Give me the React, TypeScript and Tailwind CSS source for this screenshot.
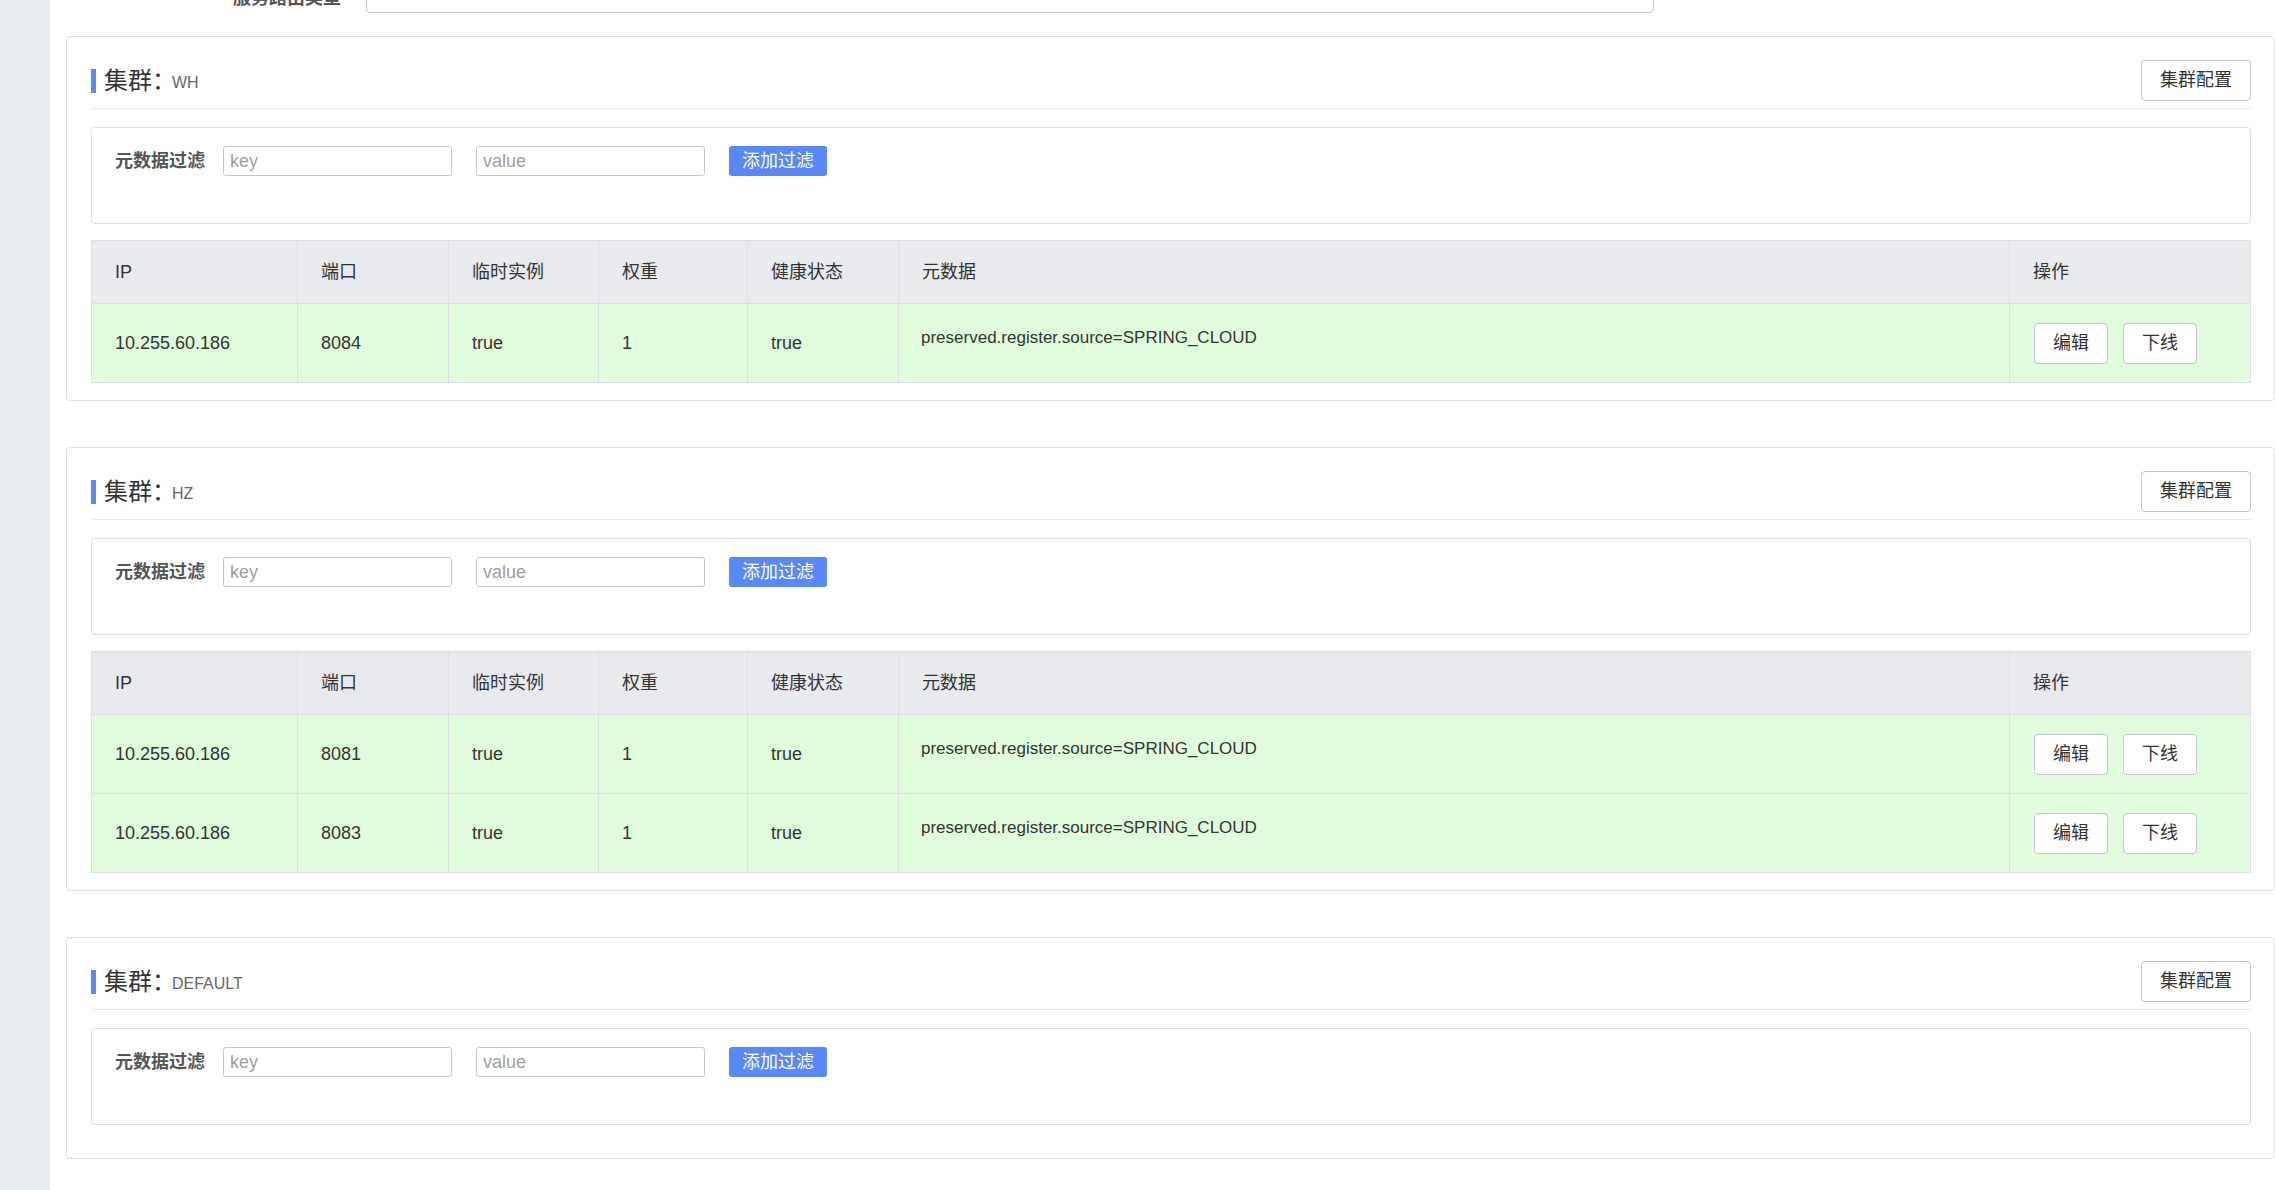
const FONT = "font-['Liberation_Sans','Noto_Sans_CJK_SC',sans-serif]";

type Instance = { ip: string; port: string };

const clusters: { name: string; instances: Instance[] }[] = [
  { name: "WH", instances: [{ ip: "10.255.60.186", port: "8084" }] },
  {
    name: "HZ",
    instances: [
      { ip: "10.255.60.186", port: "8081" },
      { ip: "10.255.60.186", port: "8083" },
    ],
  },
  { name: "DEFAULT", instances: [] },
];

const COLS = "grid grid-cols-[206px_151px_150px_149px_151px_1fr_240px]";
const HEADERS = ["IP", "端口", "临时实例", "权重", "健康状态", "元数据", "操作"];

function ClusterCard({ name, instances }: { name: string; instances: Instance[] }) {
  return (
    <div className="border border-[#dcdee3] rounded-[4px] bg-white pl-[24px] pr-[23px] pt-[23px] pb-[17px]">
      <div className="flex items-center justify-between h-[41px]">
        <div className="flex items-center">
          <span className="w-[5px] h-[24px] bg-[#5888fa]" />
          <span className="ml-[8px] text-[24px] leading-none text-[#333]">集群：</span>
          <span className="-ml-[4px] text-[16px] leading-none text-[#666] mt-[4px]">{name}</span>
        </div>
        <button className="w-[110px] h-[41px] border border-[#c4c6cf] rounded-[4px] bg-white text-[18px] text-[#333]">
          集群配置
        </button>
      </div>
      <div className="mt-[7px] h-px bg-[#e6e7eb]" />

      <div className="mt-[18px] mb-[16px] h-[97px] border border-[#dcdee3] rounded-[4px] pl-[23px] pt-[18px]">
        <div className="flex items-center h-[30px]">
          <span className="text-[18px] font-bold text-[#555] w-[90px]">元数据过滤</span>
          <input
            placeholder="key"
            className="ml-[18px] w-[229px] h-[30px] border border-[#c4c6cf] rounded-[3px] px-[6px] text-[18px] placeholder:text-[#a0a0a0] outline-none"
          />
          <input
            placeholder="value"
            className="ml-[24px] w-[229px] h-[30px] border border-[#c4c6cf] rounded-[3px] px-[6px] text-[18px] placeholder:text-[#a0a0a0] outline-none"
          />
          <button className="ml-[24px] w-[98px] h-[30px] rounded-[3px] bg-[#5888fa] text-white text-[18px]">
            添加过滤
          </button>
        </div>
      </div>

      {instances.length > 0 && (
        <div className="border border-[#dcdee3] text-[18px] text-[#333]">
          <div className={`${COLS} h-[62px] bg-[#e9eaee]`}>
            {HEADERS.map((h, i) => (
              <div
                key={h}
                className={`flex items-center pl-[23px] ${i < HEADERS.length - 1 ? "border-r border-[#dcdee3]" : ""}`}
              >
                {h}
              </div>
            ))}
          </div>
          {instances.map((ins) => (
            <div key={ins.port} className={`${COLS} h-[79px] border-t border-[#dcdee3] bg-[#e1fcdc]`}>
              <div className="flex items-center pl-[23px] border-r border-[#dcdee3]">{ins.ip}</div>
              <div className="flex items-center pl-[23px] border-r border-[#dcdee3]">{ins.port}</div>
              <div className="flex items-center pl-[23px] border-r border-[#dcdee3]">true</div>
              <div className="flex items-center pl-[23px] border-r border-[#dcdee3]">1</div>
              <div className="flex items-center pl-[23px] border-r border-[#dcdee3]">true</div>
              <div className="pl-[22px] pt-[22px] text-[17px] leading-[24px] border-r border-[#dcdee3]">
                preserved.register.source=SPRING_CLOUD
              </div>
              <div className="flex items-center pl-[24px] gap-[15px]">
                <button className="w-[74px] h-[41px] border border-[#c4c6cf] rounded-[4px] bg-white">编辑</button>
                <button className="w-[74px] h-[41px] border border-[#c4c6cf] rounded-[4px] bg-white">下线</button>
              </div>
            </div>
          ))}
        </div>
      )}
    </div>
  );
}

export default function App() {
  return (
    <div className={`${FONT} flex h-[1190px] overflow-hidden bg-white`}>
      <div className="w-[50px] shrink-0 bg-[#e9ecf1]" />
      <div className="flex-1 pl-[16px]">
        <div className="flex items-center h-[30px] -mt-[17px]">
          <span className="ml-[167px] w-[108px] text-[18px] font-bold text-[#555] leading-none">服务路由类型</span>
          <div className="ml-[25px] w-[1288px] h-[30px] border border-[#c4c6cf] rounded-[4px]" />
        </div>
        <div className="mt-[23px] flex flex-col gap-[46px]">
          {clusters.map((c) => (
            <ClusterCard key={c.name} name={c.name} instances={c.instances} />
          ))}
        </div>
      </div>
    </div>
  );
}
